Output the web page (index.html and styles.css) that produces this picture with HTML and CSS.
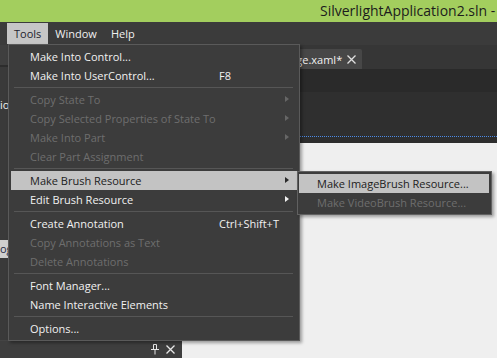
FILE: index.html
```html
<!DOCTYPE html>
<html lang="en">
  <head>
    <meta charset="UTF-8" />
    <title>SilverlightApplication2.sln - Tools</title>
    <link rel="stylesheet" href="styles.css">
  </head>
  <body>
    <div class="app">
      <!-- title bar -->
      <header class="titlebar">
        <span class="title">SilverlightApplication2.sln -</span>
      </header>

      <!-- main menu -->
      <nav class="menubar">
        <span class="menu-title open">Tools</span>
        <span class="menu-title">Window</span>
        <span class="menu-title">Help</span>
      </nav>

      <div class="workspace">
        <!-- left panel -->
        <aside class="sidebar">
          <div class="side-head"></div>
          <div class="side-rule"></div>
          <div class="side-list">
            <div class="side-row">io</div>
            <div class="side-row"></div>
            <div class="side-row"></div>
            <div class="side-row"></div>
            <div class="side-row"></div>
            <div class="side-row"></div>
            <div class="side-row"></div>
            <div class="side-row"></div>
            <div class="side-row selected">og</div>
          </div>
          <div class="side-foot">
            <svg class="pin" width="8" height="11" viewBox="0 0 8 11">
              <path d="M2.5 0.5h3v5h-3z M0 5.5h8 M4 5.5v5" fill="none" stroke="#e8e8e8" stroke-width="1" />
            </svg>
            <svg class="close" width="9" height="9" viewBox="0 0 9 9">
              <path d="M0.5 0.5l8 8 M8.5 0.5l-8 8" stroke="#e8e8e8" stroke-width="1.3" />
            </svg>
          </div>
        </aside>

        <!-- document area -->
        <main class="docarea">
          <div class="tabstrip">
            <div class="tab">
              <span>MainPage.xaml*</span>
              <svg width="9" height="9" viewBox="0 0 9 9">
                <path d="M0.5 0.5l8 8 M8.5 0.5l-8 8" stroke="#e0e0e0" stroke-width="1.3" />
              </svg>
            </div>
          </div>
          <div class="toolbar"></div>
          <div class="artboard-top"></div>
          <div class="artboard-gap"></div>
          <div class="canvas"></div>
        </main>
      </div>

      <!-- Tools dropdown -->
      <div class="dropdown">
        <div class="item"><span>Make Into Control...</span></div>
        <div class="item"><span>Make Into UserControl...</span><span class="key">F8</span></div>
        <div class="sep"></div>
        <div class="item disabled has-sub"><span>Copy State To</span></div>
        <div class="item disabled has-sub"><span>Copy Selected Properties of State To</span></div>
        <div class="item disabled has-sub"><span>Make Into Part</span></div>
        <div class="item disabled"><span>Clear Part Assignment</span></div>
        <div class="sep"></div>
        <div class="item active has-sub"><span>Make Brush Resource</span></div>
        <div class="item has-sub"><span>Edit Brush Resource</span></div>
        <div class="sep"></div>
        <div class="item"><span>Create Annotation</span><span class="key">Ctrl+Shift+T</span></div>
        <div class="item disabled"><span>Copy Annotations as Text</span></div>
        <div class="item disabled"><span>Delete Annotations</span></div>
        <div class="sep"></div>
        <div class="item"><span>Font Manager...</span></div>
        <div class="item"><span>Name Interactive Elements</span></div>
        <div class="sep"></div>
        <div class="item"><span>Options...</span></div>
      </div>

      <!-- Make Brush Resource submenu -->
      <div class="submenu">
        <div class="item active"><span>Make ImageBrush Resource...</span></div>
        <div class="item disabled"><span>Make VideoBrush Resource...</span></div>
      </div>
    </div>
  </body>
</html>
```

FILE: styles.css
```css
body {
  margin: 0;
  font-family: "Open Sans", "Noto Sans", sans-serif;
  font-size: 11px;
  background-color: #efefef;
  color: #f0f0f0;
}
.app {
  position: relative;
  width: 497px;
  height: 358px;
  overflow: hidden;
  display: flex;
  flex-direction: column;
}

/* title bar */
.titlebar {
  height: 22px;
  flex: none;
  background-color: #a3ce5e;
  white-space: nowrap;
  overflow: hidden;
}
.titlebar .title {
  display: block;
  padding-left: 320px;
  font-size: 14px;
  line-height: 22px;
  color: #1c1c1c;
}

/* menu bar */
.menubar {
  height: 23px;
  flex: none;
  display: flex;
  align-items: flex-start;
  padding-left: 7px;
  background-color: #3b3b3b;
}
.menu-title {
  margin-top: 1px;
  height: 21px;
  line-height: 21px;
  padding: 0 7px;
  color: #f0f0f0;
}
.menu-title.open {
  background-color: #c6c6c6;
  color: #1e1e2e;
}

/* workspace */
.workspace {
  flex: 1;
  display: flex;
  min-height: 0;
}
.sidebar {
  width: 182px;
  flex: none;
  display: flex;
  flex-direction: column;
  background-color: #3a3a3a;
}
.side-head {
  height: 20px;
  background-color: #3f3f3f;
}
.side-rule {
  height: 2px;
  background-color: #2d2d2d;
}
.side-list {
  flex: 1;
  padding-top: 29px;
}
.side-row {
  height: 18px;
  line-height: 18px;
  white-space: nowrap;
  color: #f0f0f0;
}
.side-row.selected {
  background-color: #cfcfcf;
  color: #1f2a44;
}
.side-foot {
  height: 17px;
  display: flex;
  align-items: center;
  justify-content: flex-end;
  gap: 7px;
  padding-right: 7px;
  border-top: 1px solid #444;
  background-color: #3e3e3e;
}

.docarea {
  flex: 1;
  display: flex;
  flex-direction: column;
}
.tabstrip {
  height: 24px;
  flex: none;
  display: flex;
  align-items: flex-end;
  background-color: #363636;
}
.tab {
  margin-left: 68px;
  height: 20px;
  display: flex;
  align-items: center;
  gap: 5px;
  padding: 0 6px 0 8px;
  background-color: #474747;
  border-radius: 2px 2px 0 0;
  color: #f0f0f0;
}
.toolbar {
  height: 23px;
  flex: none;
  background-color: #2a2a2a;
}
.artboard-top {
  height: 44px;
  flex: none;
  background-color: #2f2f2f;
  border-bottom: 1px dotted #4a8ae6;
}
.artboard-gap {
  height: 6px;
  flex: none;
  background-color: #2d2d2d;
}
.canvas {
  flex: 1;
  background-color: #efefef;
}

/* menus */
.dropdown,
.submenu {
  position: absolute;
  background-color: #3c3c3c;
  border: 1px solid #5a5a5a;
  box-shadow: 2px 2px 3px rgba(0, 0, 0, 0.35);
}
.dropdown {
  left: 8px;
  top: 44px;
  width: 286px;
  padding: 2px 2px 2px 2px;
}
.submenu {
  left: 297px;
  top: 171px;
  width: 190px;
  padding: 2px 2px 2px 1px;
  border-color: #616161;
}
.item {
  position: relative;
  display: grid;
  grid-template-columns: 189px 1fr 12px;
  height: 19px;
  line-height: 19px;
  padding-left: 19px;
  white-space: nowrap;
  color: #f1f1f1;
}
.submenu .item {
  display: block;
  padding-left: 18px;
}
.item.disabled {
  color: #6e6e6e;
}
.item.active {
  background-color: #c3c3c3;
  color: #1c1c1c;
}
.item.has-sub::after {
  content: "";
  position: absolute;
  right: 8px;
  top: 6px;
  border-left: 4px solid #f1f1f1;
  border-top: 3.5px solid transparent;
  border-bottom: 3.5px solid transparent;
}
.item.disabled.has-sub::after {
  border-left-color: #666;
}
.item.active.has-sub::after {
  border-left-color: #2a2a2a;
}
.sep {
  height: 1px;
  margin: 2px 4px 2px 3px;
  background-color: #565656;
}
```
